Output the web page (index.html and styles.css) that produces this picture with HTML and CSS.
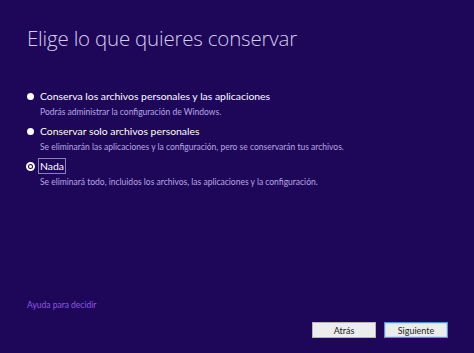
FILE: index.html
```html
<!DOCTYPE html>
<html lang="es">
<head>
<meta charset="utf-8">
<link rel="stylesheet" href="styles.css">
</head>
<body>
<div class="page">
  <h1 class="title">Elige lo que quieres conservar</h1>
  <div class="options">
    <div class="option">
      <div class="row"><span class="radio"></span><span class="label">Conserva los archivos personales y las aplicaciones</span></div>
      <div class="desc">Podrás administrar la configuración de Windows.</div>
    </div>
    <div class="option">
      <div class="row"><span class="radio"></span><span class="label">Conservar solo archivos personales</span></div>
      <div class="desc">Se eliminarán las aplicaciones y la configuración, pero se conservarán tus archivos.</div>
    </div>
    <div class="option">
      <div class="row"><span class="radio checked"></span><span class="label focus">Nada</span></div>
      <div class="desc">Se eliminará todo, incluidos los archivos, las aplicaciones y la configuración.</div>
    </div>
  </div>
  <div class="spacer"></div>
  <a class="help">Ayuda para decidir</a>
  <div class="buttons">
    <button class="btn">Atrás</button>
    <button class="btn default">Siguiente</button>
  </div>
</div>
</body>
</html>
```

FILE: styles.css
```css
html, body {
  margin: 0;
  padding: 0;
  background: #1e0659;
}
.page {
  height: 353px;
  box-sizing: border-box;
  display: flex;
  flex-direction: column;
  padding: 24px 26px 15px 27px;
  font-family: "Lato", "Open Sans", sans-serif;
}
.title {
  margin: 0;
  font-family: "Open Sans", "Noto Sans", sans-serif;
  font-weight: 300;
  font-size: 20.5px;
  line-height: 28px;
  color: #d6cdee;
  letter-spacing: -0.2px;
}
.options {
  margin-top: 37px;
  display: flex;
  flex-direction: column;
  gap: 6px;
}
.option {
  display: flex;
  flex-direction: column;
}
.row {
  display: flex;
  align-items: center;
  height: 14px;
}
.radio {
  width: 7px;
  height: 7px;
  border-radius: 50%;
  background: #ffffff;
  margin-right: 6px;
  box-sizing: border-box;
}
.radio.checked {
  width: 9px;
  height: 9px;
  margin-left: -1px;
  margin-right: 5px;
  background: #1e0659;
  border: 2px solid #ffffff;
  display: flex;
  align-items: center;
  justify-content: center;
}
.radio.checked::after {
  content: "";
  width: 3px;
  height: 3px;
  border-radius: 50%;
  background: #ffffff;
}
.label {
  font-size: 10.4px;
  color: #ffffff;
  line-height: 14px;
}
.label.focus {
  outline: 1px solid #8c80b8;
  padding: 0 1px;
  margin-left: -1px;
}
.desc {
  margin-left: 13px;
  margin-top: 3px;
  font-size: 8.5px;
  line-height: 12px;
  color: #b7a9e2;
}
.spacer {
  flex: 1;
}
.help {
  font-size: 8.5px;
  line-height: 12px;
  color: #8a5ae6;
  align-self: flex-start;
}
.buttons {
  margin-top: 11px;
  display: flex;
  justify-content: flex-end;
  gap: 8px;
}
.btn {
  width: 64px;
  height: 16px;
  padding: 0;
  margin: 0;
  border: 1px solid #b4b4b4;
  background: #ececec;
  font-family: "Lato", "Open Sans", sans-serif;
  font-size: 9px;
  color: #222222;
}
.btn.default {
  border-color: #5a8ee6;
  box-shadow: inset 0 0 0 1px #c9dcf7;
}
```
